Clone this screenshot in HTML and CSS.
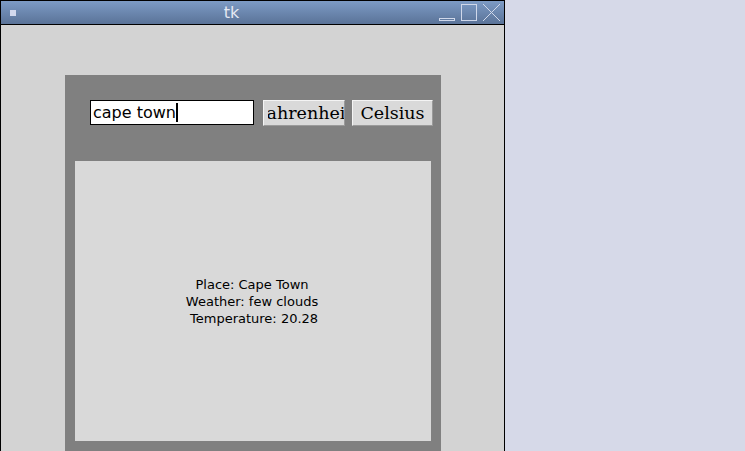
FILE: index.html
```html
<!DOCTYPE html>
<html>
<head>
<meta charset="utf-8">
<link rel="stylesheet" href="styles.css">
</head>
<body>
<div class="window">
  <div class="titlebar">
    <span class="menu-btn"></span>
    <span class="title">tk</span>
    <div class="controls">
      <svg width="64" height="20" viewBox="0 0 64 20">
        <rect x="1.5" y="14.5" width="15" height="2" fill="none" stroke="#d0d8ea" stroke-width="1"/>
        <rect x="23.5" y="0.5" width="15" height="16" fill="none" stroke="#d0d8ea" stroke-width="1"/>
        <path d="M45 0 L62 17 M62 0 L45 17" stroke="#d0d8ea" stroke-width="1" fill="none"/>
      </svg>
    </div>
  </div>
  <div class="client">
    <div class="frame">
      <div class="controls-row">
        <div class="entry"><span>cape town</span><span class="cursor"></span></div>
        <div class="btn btn-f"><div class="clip-box"><span class="clip">Fahrenheit</span></div></div>
        <div class="btn btn-c">Celsius</div>
      </div>
      <div class="result">
        <div class="lines">Place: Cape Town<br>Weather: few clouds<br>&nbsp;Temperature: 20.28</div>
      </div>
    </div>
  </div>
</div>
</body>
</html>
```
FILE: styles.css
```css
html, body {
  margin: 0;
  padding: 0;
  background: #d6d9e8;
  height: 451px;
  overflow: hidden;
}
.window {
  width: 503px;
  height: 450px;
  border: 1px solid #000;
  border-bottom: none;
  display: flex;
  flex-direction: column;
  background: #d3d3d3;
}
.titlebar {
  height: 23px;
  flex: none;
  border-bottom: 1px solid #000;
  background: linear-gradient(#7d9bc5, #5a7398);
  display: flex;
  align-items: center;
  position: relative;
}
.menu-btn {
  width: 6px;
  height: 6px;
  background: #d2d9ee;
  margin-left: 9px;
}
.title {
  position: absolute;
  left: 0;
  right: 0;
  top: 2px;
  text-align: center;
  font-family: "DejaVu Sans", sans-serif;
  font-size: 16px;
  color: #e4e9f3;
  padding-right: 42px;
}
.controls {
  margin-left: auto;
  margin-right: 2px;
  margin-top: 2px;
  display: flex;
}
.client {
  flex: 1;
  display: flex;
  flex-direction: column;
  padding-left: 64px;
  padding-top: 50px;
}
.frame {
  width: 376px;
  flex: 1;
  background: #808080;
  display: flex;
  flex-direction: column;
  box-sizing: border-box;
  padding: 25px 10px 10px 10px;
}
.controls-row {
  display: flex;
  align-items: flex-start;
  padding-left: 15px;
  height: 61px;
}
.entry {
  flex: none;
  width: 160px;
  height: 23px;
  background: #fff;
  border: 1px solid #000;
  font-family: "DejaVu Sans", sans-serif;
  font-size: 16px;
  line-height: 23px;
  color: #000;
  display: flex;
  align-items: center;
  padding-left: 2px;
}
.cursor {
  width: 2px;
  height: 19px;
  background: #000;
}
.btn {
  flex: none;
  height: 24px;
  background: #d9d9d9;
  border-top: 1px solid #f4f4f4;
  border-left: 1px solid #f4f4f4;
  border-bottom: 1px solid #9a9a9a;
  border-right: 1px solid #9a9a9a;
  font-family: "DejaVu Serif", serif;
  font-size: 17.5px;
  line-height: 25px;
  color: #000;
  display: flex;
  justify-content: center;
  overflow: hidden;
  white-space: nowrap;
}
.btn-f {
  width: 80px;
  margin-left: 9px;
}
.btn-c {
  width: 79px;
  margin-left: 7px;
}
.clip-box {
  flex: 1;
  margin-left: 4px;
  display: flex;
  justify-content: center;
  overflow: hidden;
}
.clip {
  flex: none;
  margin-right: 4px;
}
.result {
  flex: 1;
  background: #d9d9d9;
  display: flex;
  align-items: center;
  justify-content: center;
}
.lines {
  font-family: "DejaVu Sans", sans-serif;
  font-size: 13px;
  line-height: 17px;
  color: #000;
  text-align: center;
  margin-left: -2px;
}
```
